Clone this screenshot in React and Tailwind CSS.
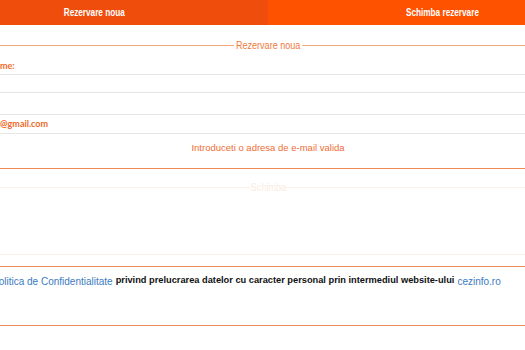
import React from 'react';

const arial = { fontFamily: '"Liberation Sans", Arial, sans-serif' };
const lato = { fontFamily: 'Lato, "Open Sans", sans-serif' };

// Arial Narrow look: Liberation Sans squeezed horizontally
const Narrow = ({ children, className = '' }) => (
  <span className={`inline-block scale-x-[0.82] ${className}`} style={arial}>{children}</span>
);

const Legend = ({ label, lineClass, textClass }) => (
  <div className="flex items-center h-[12px]">
    <div className={`flex-1 h-px ${lineClass}`} />
    <Narrow className={`-mx-[5px] leading-[12px] ${textClass}`}>{label}</Narrow>
    <div className={`flex-1 h-px ${lineClass}`} />
  </div>
);

export default function App() {
  return (
    <div className="w-[525px] h-[350px] overflow-hidden bg-white">
      <div className="w-[696px] -ml-[80px]">
        {/* Tabs */}
        <div className="flex h-[25px] text-white font-bold text-[10px]">
          <div className="w-[348px] bg-[#ef4d0b] flex items-center justify-center">
            <Narrow>Rezervare noua</Narrow>
          </div>
          <div className="flex-1 bg-[#fe5200] flex items-center justify-center">
            <Narrow>Schimba rezervare</Narrow>
          </div>
        </div>

        {/* Rezervare noua */}
        <div className="pt-[14px]">
          <Legend label="Rezervare noua" lineClass="bg-[#f5a67c]" textClass="text-[11px] text-[#f0793c]" />
        </div>

        <div className="mt-[9px] h-[12px] leading-[12px] pl-[68px] text-[9px] font-bold text-[#f06a2a]" style={lato}>
          Nume:
        </div>
        <div className="mt-[2px] h-[19px] border-y border-[#e6e6e6]" />
        <div className="h-[22px] border-b border-[#e6e6e6]" />
        <div className="h-[19px] border-b border-[#e6e6e6] flex items-center pl-[80px] text-[9px] font-bold text-[#f06a2a]" style={lato}>
          @gmail.com
        </div>

        <div className="h-[28px] flex items-center justify-center text-[9.5px] text-[#f06d38]" style={arial}>
          Introduceti o adresa de e-mail valida
        </div>
        <div className="mt-[6px] h-px bg-[#ef8a55]" />

        {/* Schimba */}
        <div className="mt-[12px]">
          <Legend label="Schimba" lineClass="bg-[#fdf2eb]" textClass="text-[11px] text-[#faebe2]" />
        </div>
        <div className="mt-[61px] h-px bg-[#fcefe6]" />

        <div className="mt-[11px] h-px bg-[#ef8a55]" />
        <div className="h-[28px] flex items-center pl-[72px] text-[10px] whitespace-nowrap" style={arial}>
          <span className="text-[#3b7bbf]">Politica de Confidentialitate</span>
          <span className="font-bold text-[9.25px] text-[#111] ml-[3px]">privind prelucrarea datelor cu caracter personal prin intermediul website-ului</span>
          <span className="text-[#3b7bbf] ml-[3px]">cezinfo.ro</span>
        </div>
        <div className="mt-[30px] h-px bg-[#ef8a55]" />
      </div>
    </div>
  );
}
